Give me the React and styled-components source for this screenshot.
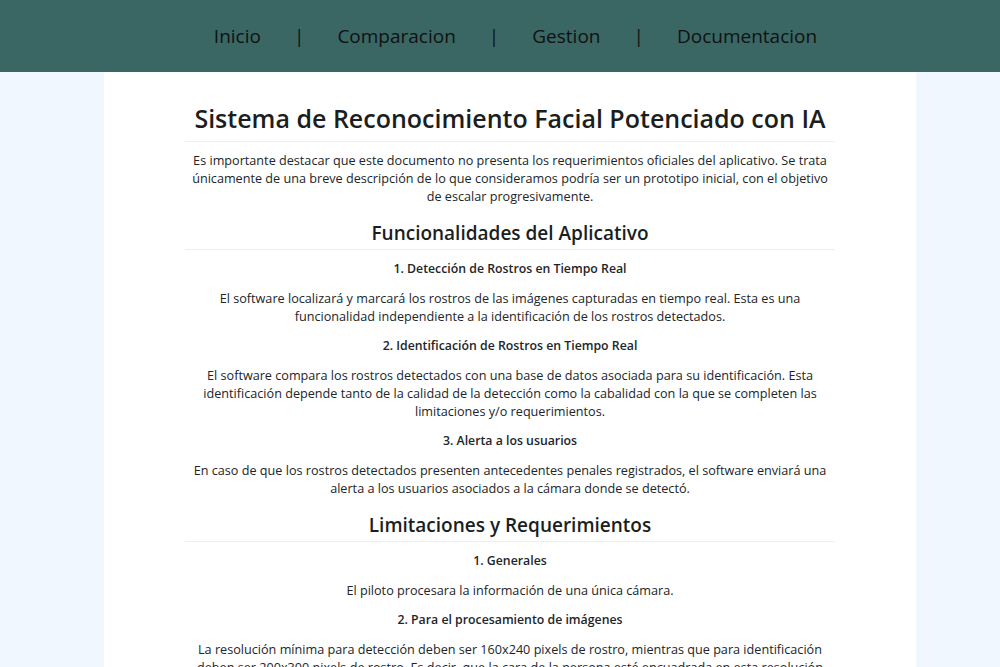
import React from 'react';
import styled, {createGlobalStyle} from 'styled-components';

const GlobalStyle = createGlobalStyle`
  * { box-sizing: border-box; }
  body {
    margin: 0;
    background: #f0f7fe;
    font-family: "Open Sans", "Noto Sans", sans-serif;
    color: #212529;
  }
`;

const NavBar = styled.nav`
  height: 72px;
  background: #3a6764;
  display: flex;
  align-items: center;
  justify-content: center;
  padding-left: 31px;
`;

const NavList = styled.ul`
  display: flex;
  align-items: center;
  gap: 33px;
  margin: 0;
  padding: 0;
  list-style: none;
  font-size: 19px;
  color: #111;
`;

const NavItem = styled.li`
  cursor: pointer;
`;

const Separator = styled.li`
  color: #111;
`;

const Page = styled.main`
  width: 812px;
  margin: 0 auto 0 104px;
  background: #fff;
  padding: 31px 0 40px;
  min-height: 700px;
`;

const Content = styled.div`
  width: 650px;
  margin: 0 auto;
  text-align: center;
`;

const Title = styled.h1`
  margin: 0;
  font-size: 25px;
  font-weight: 600;
  line-height: 30px;
  padding-bottom: 8px;
  border-bottom: 1px solid #eceff1;
  margin-bottom: 9px;
  color: #1b1e21;
`;

const SectionTitle = styled.h2`
  margin: 17px 0 10px;
  font-size: 19px;
  font-weight: 600;
  line-height: 23px;
  padding-bottom: 4px;
  border-bottom: 1px solid #eceff1;
  color: #1b1e21;
`;

const ItemTitle = styled.h4`
  margin: 0 0 11px;
  font-size: 12.3px;
  font-weight: 600;
  line-height: 18px;
`;

const Text = styled.p`
  margin: 0 0 12px;
  font-size: 12.65px;
  line-height: 18px;
`;

const links = ['Inicio', 'Comparacion', 'Gestion', 'Documentacion'];

const sections = [
  {
    title: 'Funcionalidades del Aplicativo',
    items: [
      {
        name: '1. Detección de Rostros en Tiempo Real',
        text: 'El software localizará y marcará los rostros de las imágenes capturadas en tiempo real. Esta es una funcionalidad independiente a la identificación de los rostros detectados.',
      },
      {
        name: '2. Identificación de Rostros en Tiempo Real',
        text: 'El software compara los rostros detectados con una base de datos asociada para su identificación. Esta identificación depende tanto de la calidad de la detección como la cabalidad con la que se completen las limitaciones y/o requerimientos.',
      },
      {
        name: '3. Alerta a los usuarios',
        text: 'En caso de que los rostros detectados presenten antecedentes penales registrados, el software enviará una alerta a los usuarios asociados a la cámara donde se detectó.',
      },
    ],
  },
  {
    title: 'Limitaciones y Requerimientos',
    items: [
      {
        name: '1. Generales',
        text: 'El piloto procesara la información de una única cámara.',
      },
      {
        name: '2. Para el procesamiento de imágenes',
        text: 'La resolución mínima para detección deben ser 160x240 pixels de rostro, mientras que para identificación deben ser 200x300 pixels de rostro. Es decir, que la cara de la persona esté encuadrada en esta resolución como mínimo para poder ser procesada correctamente.',
      },
    ],
  },
];

const App = () => {
  return (
    <>
      <GlobalStyle />
      <NavBar>
        <NavList>
          {links.map((l, i) => (
            <React.Fragment key={l}>
              {i > 0 && <Separator>|</Separator>}
              <NavItem>{l}</NavItem>
            </React.Fragment>
          ))}
        </NavList>
      </NavBar>
      <Page>
        <Content>
          <Title>Sistema de Reconocimiento Facial Potenciado con IA</Title>
          <Text>
            Es importante destacar que este documento no presenta los requerimientos oficiales del aplicativo. Se trata
            únicamente de una breve descripción de lo que consideramos podría ser un prototipo inicial, con el objetivo
            de escalar progresivamente.
          </Text>
          {sections.map(s => (
            <section key={s.title}>
              <SectionTitle>{s.title}</SectionTitle>
              {s.items.map(it => (
                <React.Fragment key={it.name}>
                  <ItemTitle>{it.name}</ItemTitle>
                  <Text>{it.text}</Text>
                </React.Fragment>
              ))}
            </section>
          ))}
        </Content>
      </Page>
    </>
  );
};

export default App;
